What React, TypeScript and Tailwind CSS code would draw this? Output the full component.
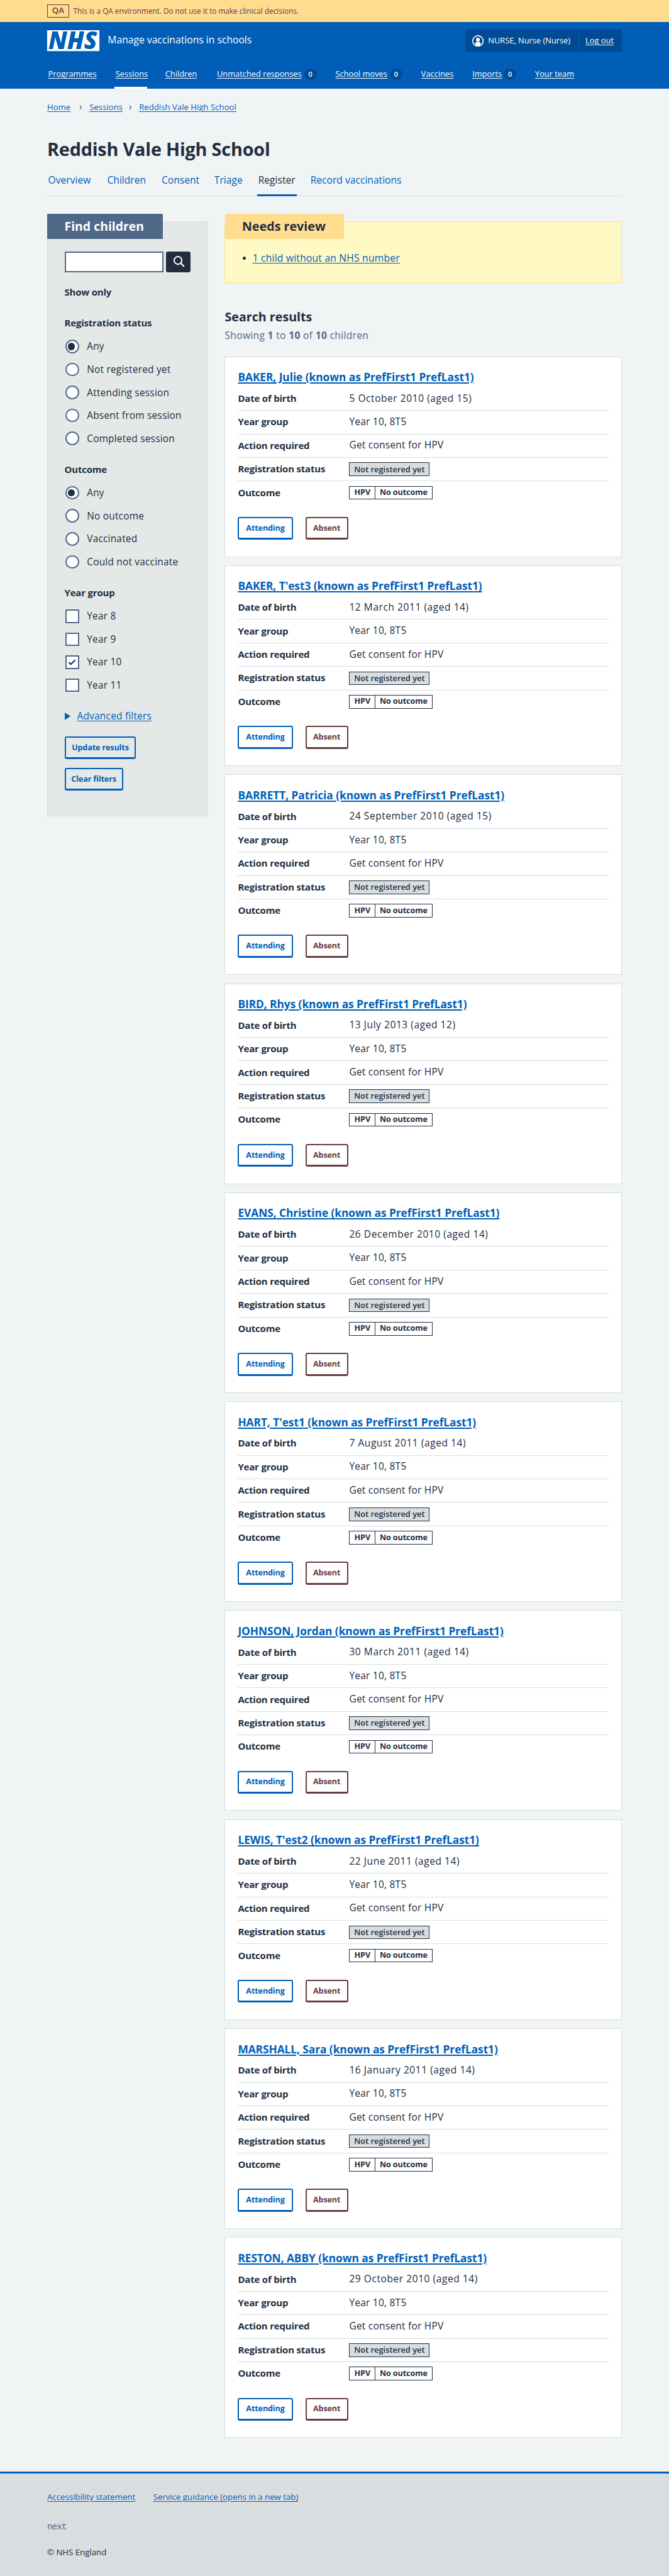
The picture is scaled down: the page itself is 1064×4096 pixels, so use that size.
import type { ReactNode } from "react";

const navItems = [
  { label: "Programmes", width: "w-24.25" },
  { label: "Sessions", width: "w-15.75", current: true },
  { label: "Children", width: "w-16.75" },
  { label: "Unmatched responses", width: "w-48.75", count: 0 },
  { label: "School moves", width: "w-33", count: 0 },
  { label: "Vaccines", width: "w-16.5" },
  { label: "Imports", width: "w-22", count: 0 },
  { label: "Your team", width: "w-20.25" },
];

const tabs = [
  { label: "Overview", width: "w-22.25" },
  { label: "Children", width: "w-20" },
  { label: "Consent", width: "w-19.25" },
  { label: "Triage", width: "w-15" },
  { label: "Register", width: "w-19", current: true },
  { label: "Record vaccinations", width: "w-45" },
];

const children = [
  { name: "BAKER, Julie", born: "5 October 2010 (aged 15)" },
  { name: "BAKER, T'est3", born: "12 March 2011 (aged 14)" },
  { name: "BARRETT, Patricia", born: "24 September 2010 (aged 15)" },
  { name: "BIRD, Rhys", born: "13 July 2013 (aged 12)" },
  { name: "EVANS, Christine", born: "26 December 2010 (aged 14)" },
  { name: "HART, T'est1", born: "7 August 2011 (aged 14)" },
  { name: "JOHNSON, Jordan", born: "30 March 2011 (aged 14)" },
  { name: "LEWIS, T'est2", born: "22 June 2011 (aged 14)" },
  { name: "MARSHALL, Sara", born: "16 January 2011 (aged 14)" },
  { name: "RESTON, ABBY", born: "29 October 2010 (aged 14)" },
];

function EnvironmentBanner() {
  return (
    <div className="h-10.5 bg-[#ffdc8e] text-[#6a3b3c]">
      <div className="mx-auto flex h-full w-275 items-center gap-2">
        <span className="flex h-6.5 w-10.5 items-center justify-center border border-[#6a3b3c] text-[1rem] font-semibold">
          QA
        </span>
        <span className="pt-0.5 text-[0.888rem]">
          This is a QA environment. Do not use it to make clinical decisions.
        </span>
      </div>
    </div>
  );
}

function NhsLogo() {
  return (
    <svg viewBox="0 0 100 40" className="h-10 w-25 overflow-visible" aria-label="NHS">
      <rect width="100" height="40" fill="#fff" />
      <text
        x="2.5"
        y="36.5"
        textLength="93"
        lengthAdjust="spacingAndGlyphs"
        fill="#005eb8"
        fontFamily="Open Sans"
        fontWeight="800"
        fontStyle="italic"
        fontSize="46"
      >
        NHS
      </text>
    </svg>
  );
}

function Header() {
  return (
    <header className="h-32 bg-[#005eb8] text-white">
      <div className="mx-auto flex h-full w-275 flex-col">
        <div className="flex h-18 items-center">
          <NhsLogo />
          <span className="ml-4 pb-0.5 text-[1.18rem]">Manage vaccinations in schools</span>
          <div className="ml-auto flex h-10.5 w-75 items-center rounded-[3px] bg-[#004b93] text-[0.97rem]">
            <svg viewBox="0 0 22 22" className="ml-3.5 h-5.5 w-5.5" fill="none">
              <circle cx="11" cy="11" r="10" stroke="#fff" strokeWidth="2" />
              <circle cx="11" cy="8.4" r="3.7" fill="#fff" />
              <path d="M6 20v-4.5a3 3 0 0 1 3-3h4a3 3 0 0 1 3 3V20a10 10 0 0 1-10 0z" fill="#fff" />
            </svg>
            <span className="ml-2 tracking-[-0.002em]">NURSE, Nurse (Nurse)</span>
            <span className="ml-auto flex h-10 w-20.75 items-center border-l border-[#005eb8] pl-3">
              <a className="underline underline-offset-2">Log out</a>
            </span>
          </div>
        </div>
        <nav className="flex h-14 gap-8 text-[0.965rem]">
          {navItems.map((item) => (
            <div
              key={item.label}
              className={`flex h-full items-center px-0.5 whitespace-nowrap ${item.width} ${
                item.current ? "border-b-[3px] border-white pt-[3px]" : ""
              }`}
            >
              <a className="underline underline-offset-2">{item.label}</a>
              {item.count !== undefined && (
                <span className="ml-auto flex h-5.5 w-6 items-center justify-center rounded-full bg-[#004b93] text-[0.82rem] font-semibold">
                  {item.count}
                </span>
              )}
            </div>
          ))}
        </nav>
      </div>
    </header>
  );
}

function Chevron() {
  return (
    <span className="flex w-9 justify-center pl-1">
      <svg viewBox="0 0 6 10" className="h-2.25 w-1.5" fill="none" stroke="#506888" strokeWidth="1.7">
        <path d="M1 1l3.5 4L1 9" />
      </svg>
    </span>
  );
}

function Breadcrumbs() {
  return (
    <div className="mt-6 flex h-6 items-center text-[0.985rem] tracking-[0.004em] whitespace-nowrap text-[#005eb8]">
      <a className="w-11.25 underline underline-offset-2">Home</a>
      <Chevron />
      <a className="w-14.75 underline underline-offset-2">Sessions</a>
      <Chevron />
      <a className="underline underline-offset-2">Reddish Vale High School</a>
    </div>
  );
}

function Tabs() {
  return (
    <div className="mt-2 flex h-15.75 gap-6 border-b border-[#d8dde0] text-[1.175rem] whitespace-nowrap text-[#005eb8]">
      {tabs.map((tab) => (
        <a
          key={tab.label}
          className={`-mb-px flex items-center px-0.5 ${tab.width} ${
            tab.current ? "border-b-[3px] border-[#005eb8] pt-[3px] text-[#222e3f]" : ""
          }`}
        >
          {tab.label}
        </a>
      ))}
    </div>
  );
}

function Legend({ children, className }: { children: ReactNode; className: string }) {
  return (
    <div className={`flex h-7 items-center text-[1.13rem] font-bold tracking-[-0.014em] ${className}`}>{children}</div>
  );
}

function Options({ type, labels, selected }: { type: "radio" | "checkbox"; labels: string[]; selected: string }) {
  return (
    <div className="mt-2.25">
      {labels.map((label) => (
        <div key={label} className="flex h-11 items-center">
          <span
            className={`ml-0.5 flex h-6.5 w-6.5 shrink-0 items-center border-2 border-[#506888] bg-white ${
              type === "radio" ? "rounded-full" : ""
            }`}
          >
            {label === selected && type === "radio" && (
              <span className="ml-0.5 h-3.5 w-3.5 rounded-full bg-[#222e3f]" />
            )}
            {label === selected && type === "checkbox" && (
              <svg viewBox="0 0 14 12" className="ml-0.75 h-3 w-3.5" fill="none" stroke="#222e3f" strokeWidth="2.6">
                <path d="M0.5 6l4 4 8.5-8.5" />
              </svg>
            )}
          </span>
          <span className="ml-3.75 text-[1.16rem] tracking-[0.014em] whitespace-nowrap">{label}</span>
        </div>
      ))}
    </div>
  );
}

function Button({ children, className }: { children: ReactNode; className: string }) {
  return (
    <button
      className={`flex h-11 items-center justify-center rounded-[3px] border-2 border-b-[3px] pt-px text-[0.95rem] font-bold tracking-[-0.012em] whitespace-nowrap ${className}`}
    >
      {children}
    </button>
  );
}

function Filters() {
  return (
    <aside className="mt-3.75 h-284.5 w-77 border border-[#d8dde0] bg-[#e4e9e8] px-8">
      <h2 className="-mt-4 -ml-8.25 flex h-12 w-55.25 items-center bg-[#506888] pl-8.25 text-[1.46rem] font-bold whitespace-nowrap text-white">
        Find children
      </h2>
      <div className="mt-6 flex h-10 gap-1">
        <div className="w-47.5 border-2 border-[#506888] bg-white" />
        <div className="w-12 rounded-[3px] bg-[#222e3f]">
          <svg viewBox="0 0 48 40" className="h-full w-full" fill="none" stroke="#fff" strokeWidth="2.4">
            <circle cx="23" cy="17" r="7.3" />
            <path d="M28.3 22.3L34 28" strokeLinecap="round" strokeWidth="2.8" />
          </svg>
        </div>
      </div>
      <Legend className="mt-5.75">Show only</Legend>
      <Legend className="mt-8">Registration status</Legend>
      <Options
        type="radio"
        selected="Any"
        labels={["Any", "Not registered yet", "Attending session", "Absent from session", "Completed session"]}
      />
      <Legend className="mt-5.75">Outcome</Legend>
      <Options type="radio" selected="Any" labels={["Any", "No outcome", "Vaccinated", "Could not vaccinate"]} />
      <Legend className="mt-5.75">Year group</Legend>
      <Options type="checkbox" selected="Year 10" labels={["Year 8", "Year 9", "Year 10", "Year 11"]} />
      <div className="mt-6 flex h-7 items-center text-[1.17rem] tracking-[0.01em] text-[#005eb8]">
        <svg viewBox="0 0 11 14" className="h-3.5 w-2.75" fill="#005eb8">
          <path d="M0 0l11 7-11 7z" />
        </svg>
        <a className="ml-3.25 pb-0.25 underline underline-offset-2">Advanced filters</a>
      </div>
      <Button className="mt-6 w-34.25 border-[#005eb8] text-[#005eb8]">Update results</Button>
      <Button className="mt-4 w-28 border-[#005eb8] text-[#005eb8]">Clear filters</Button>
    </aside>
  );
}

function Review() {
  return (
    <section className="mt-3.75 h-29.5 border border-[#ffdc8e] bg-[#fff9c4] px-8">
      <h2 className="-mt-4 -ml-8.25 flex h-12 w-57 items-center bg-[#ffdc8e] pl-8.25 text-[1.48rem] font-bold whitespace-nowrap">
        Needs review
      </h2>
      <div className="mt-5.75 flex h-7 items-center">
        <span className="ml-0.25 h-1.5 w-1.5 rounded-full bg-[#222e3f]" />
        <a className="ml-3.25 text-[1.18rem] tracking-[0.012em] text-[#005eb8] underline underline-offset-2">
          1 child without an NHS number
        </a>
      </div>
    </section>
  );
}

function Row({ label, children }: { label: string; children: ReactNode }) {
  return (
    <div className="h-11.25 border-b border-[#d8dde0] pt-1.75 last:border-transparent">
      <div className="flex h-7 items-center text-[1.17rem]">
        <dt className="w-53.25 text-[1.13rem] font-bold tracking-[-0.014em]">{label}</dt>
        <dd className="tracking-[0.013em]">{children}</dd>
      </div>
    </div>
  );
}

function ChildCard({ name, born }: { name: string; born: string }) {
  return (
    <article className="h-96 border border-[#d8dde0] bg-white px-6 pt-5.5">
      <h3 className="flex h-8 items-center text-[1.305rem] font-bold tracking-[-0.004em] whitespace-nowrap text-[#005eb8]">
        <a className="underline decoration-2 underline-offset-2">{name} (known as PrefFirst1 PrefLast1)</a>
      </h3>
      <dl className="mt-1">
        <Row label="Date of birth">
          <span className="tracking-[0.035em]">{born}</span>
        </Row>
        <Row label="Year group">Year 10, 8T5</Row>
        <Row label="Action required">Get consent for HPV</Row>
        <Row label="Registration status">
          <span className="mt-0.5 flex h-6.5 w-38.5 items-center justify-center border border-[#222e3f] bg-[#d8dde0] text-[0.965rem] font-semibold tracking-normal">
            Not registered yet
          </span>
        </Row>
        <Row label="Outcome">
          <span className="mt-0.5 flex h-6.5 w-39.75 border border-[#222e3f] text-[0.95rem] font-bold tracking-[-0.01em]">
            <span className="flex w-12.25 items-center justify-center border-r border-[#222e3f]">HPV</span>
            <span className="flex flex-1 items-center justify-center">No outcome</span>
          </span>
        </Row>
      </dl>
      <div className="mt-5.75 flex gap-6">
        <Button className="w-26.25 border-[#005eb8] text-[#005eb8]">Attending</Button>
        <Button className="w-20.5 border-[#6a3b3c] text-[#6a3b3c]">Absent</Button>
      </div>
    </article>
  );
}

function Footer() {
  return (
    <footer className="bg-[#d8dde0]">
      <div className="h-1 bg-[#005eb8]" />
      <div className="mx-auto h-49 w-275 pt-8.5 text-[0.995rem]">
        <div className="flex h-6 items-center whitespace-nowrap text-[#005eb8]">
          <a className="w-50.75 underline underline-offset-2">Accessibility statement</a>
          <a className="underline underline-offset-2">Service guidance (opens in a new tab)</a>
        </div>
        <div className="mt-8.25 flex h-6 items-center font-['Liberation_Mono',monospace] text-[1.06rem] tracking-[-0.05em] text-[#506888]">
          next
        </div>
        <div className="mt-6.25 flex h-6 items-center">© NHS England</div>
      </div>
    </footer>
  );
}

export default function App() {
  return (
    <>
      {/* Root size that the whole rem-based scale is derived from */}
      <style>{"html { font-size: 13.296px; }"}</style>
      <div className="bg-[#f0f4f5] font-['Open_Sans',sans-serif] text-[#222e3f]">
        <EnvironmentBanner />
        <Header />
        <main className="mx-auto w-275 pb-16">
          <Breadcrumbs />
          <h1 className="mt-11.75 flex h-10 items-center text-[2.17rem] font-bold tracking-[-0.007em]">
            Reddish Vale High School
          </h1>
          <Tabs />
          <div className="mt-8.25 flex items-start gap-8">
            <Filters />
            <div className="w-190">
              <Review />
              <h2 className="mt-12 flex h-8 items-center text-[1.48rem] font-bold">Search results</h2>
              <p className="mt-1.5 flex h-7 items-center text-[1.17rem] tracking-[0.022em] text-[#506888]">
                <span>
                  Showing <b>1</b> to <b>10</b> of <b>10</b> children
                </span>
              </p>
              <div className="mt-6.5 flex flex-col gap-[0.9931rem]">
                {children.map((child) => (
                  <ChildCard key={child.name} name={child.name} born={child.born} />
                ))}
              </div>
            </div>
          </div>
        </main>
        <Footer />
      </div>
    </>
  );
}
